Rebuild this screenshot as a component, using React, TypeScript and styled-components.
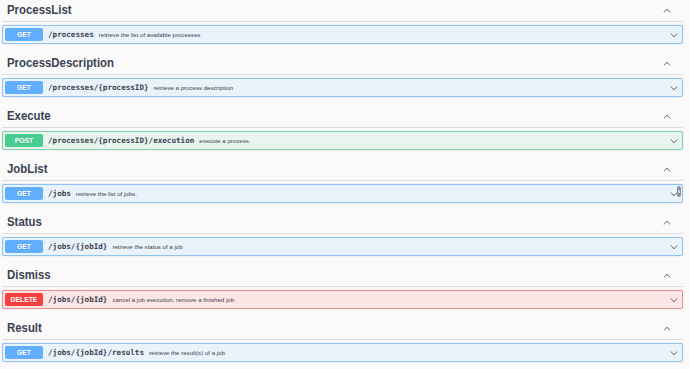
import * as React from 'react';
import styled, { createGlobalStyle } from 'styled-components';

const GlobalStyle = createGlobalStyle`
  html, body {
    margin: 0;
    padding: 0;
    background: #fafafa;
  }
  body {
    font-family: "Liberation Sans", Arial, sans-serif;
    color: #3b4151;
  }
`;

type Method = 'GET' | 'POST' | 'DELETE';

const methodColors: Record<Method, { main: string; border: string; bg: string }> = {
  GET: { main: '#61affe', border: '#8fc3f2', bg: '#e9f3fc' },
  POST: { main: '#49cc90', border: '#7ed3ab', bg: '#e7f5ee' },
  DELETE: { main: '#f93e3e', border: '#ec8d8d', bg: '#fbe6e5' },
};

const Page = styled.div`
  width: 681px;
  padding: 0 7px 0 2px;
`;

const Section = styled.section`
  margin-bottom: 9px;
`;

const TagHeader = styled.div`
  display: flex;
  align-items: center;
  justify-content: space-between;
  height: 22px;
  padding: 0 12px 0 5px;
  box-sizing: border-box;
  border-bottom: 1px solid #dcdde0;
  margin-bottom: 3px;
`;

const TagTitle = styled.h3`
  margin: 0;
  font-size: 11.4px;
  font-weight: 700;
  color: #3b4151;
  line-height: 1;
  transform: scaleY(1.08);
`;

const Op = styled.div<{ $method: Method }>`
  position: relative;
  display: flex;
  align-items: center;
  height: 19px;
  box-sizing: border-box;
  padding: 0 4px 0 2px;
  border: 1px solid ${(p) => methodColors[p.$method].border};
  background: ${(p) => methodColors[p.$method].bg};
  border-radius: 2px;
  box-shadow: 0 0 2px rgba(0, 0, 0, 0.12);
`;

const Badge = styled.span<{ $method: Method }>`
  flex: 0 0 auto;
  width: 38px;
  height: 13px;
  display: flex;
  align-items: center;
  justify-content: center;
  background: ${(p) => methodColors[p.$method].main};
  color: #fff;
  border-radius: 2px;
  font-size: 6.8px;
  font-weight: 700;
  text-shadow: 0 1px 0 rgba(0, 0, 0, 0.1);
`;

const Path = styled.span`
  margin-left: 5px;
  font-family: "DejaVu Sans Mono", "Liberation Mono", monospace;
  font-size: 7.6px;
  font-weight: 700;
  color: #3b4151;
`;

const Summary = styled.span`
  margin-left: 5px;
  font-size: 6.1px;
  color: #3b4151;
  flex: 1;
`;

const Chevron = styled.svg<{ $up?: boolean }>`
  width: 8px;
  height: 8px;
  fill: #3b4151;
  transform: ${(p) => (p.$up ? 'rotate(180deg)' : 'none')};
  flex: 0 0 auto;
`;

const Grip = styled.span`
  position: absolute;
  right: 1px;
  top: 1px;
  width: 4px;
  height: 11px;
  border-radius: 2px;
  background: #8d9298;
  &::after {
    content: '';
    position: absolute;
    left: 1px;
    top: 4px;
    width: 2px;
    height: 3px;
    background: #c9ccd0;
  }
`;

const Arrow = ({ up }: { up?: boolean }) => (
  <Chevron $up={up} viewBox="0 0 20 20">
    <path d="M17.418 6.109c.272-.268.709-.268.979 0s.271.701 0 .969l-7.908 7.83c-.27.268-.707.268-.979 0l-7.908-7.830c-.27-.268-.27-.701 0-.969.271-.268.709-.268.979 0L10 13.25l7.418-7.141z" />
  </Chevron>
);

const sections: { tag: string; method: Method; path: string; summary: string; grip?: boolean }[] = [
  { tag: 'ProcessList', method: 'GET', path: '/processes', summary: 'retrieve the list of available processes' },
  { tag: 'ProcessDescription', method: 'GET', path: '/processes/{processID}', summary: 'retrieve a process description' },
  { tag: 'Execute', method: 'POST', path: '/processes/{processID}/execution', summary: 'execute a process.' },
  { tag: 'JobList', method: 'GET', path: '/jobs', summary: 'retrieve the list of jobs.', grip: true },
  { tag: 'Status', method: 'GET', path: '/jobs/{jobId}', summary: 'retrieve the status of a job' },
  { tag: 'Dismiss', method: 'DELETE', path: '/jobs/{jobId}', summary: 'cancel a job execution, remove a finished job' },
  { tag: 'Result', method: 'GET', path: '/jobs/{jobId}/results', summary: 'retrieve the result(s) of a job' },
];

export default function App() {
  return (
    <>
      <GlobalStyle />
      <Page>
        {sections.map((s) => (
          <Section key={s.tag}>
            <TagHeader>
              <TagTitle>{s.tag}</TagTitle>
              <Arrow up />
            </TagHeader>
            <Op $method={s.method}>
              <Badge $method={s.method}>{s.method}</Badge>
              <Path>{s.path}</Path>
              <Summary>{s.summary}</Summary>
              <Arrow />
              {s.grip && <Grip />}
            </Op>
          </Section>
        ))}
      </Page>
    </>
  );
}
